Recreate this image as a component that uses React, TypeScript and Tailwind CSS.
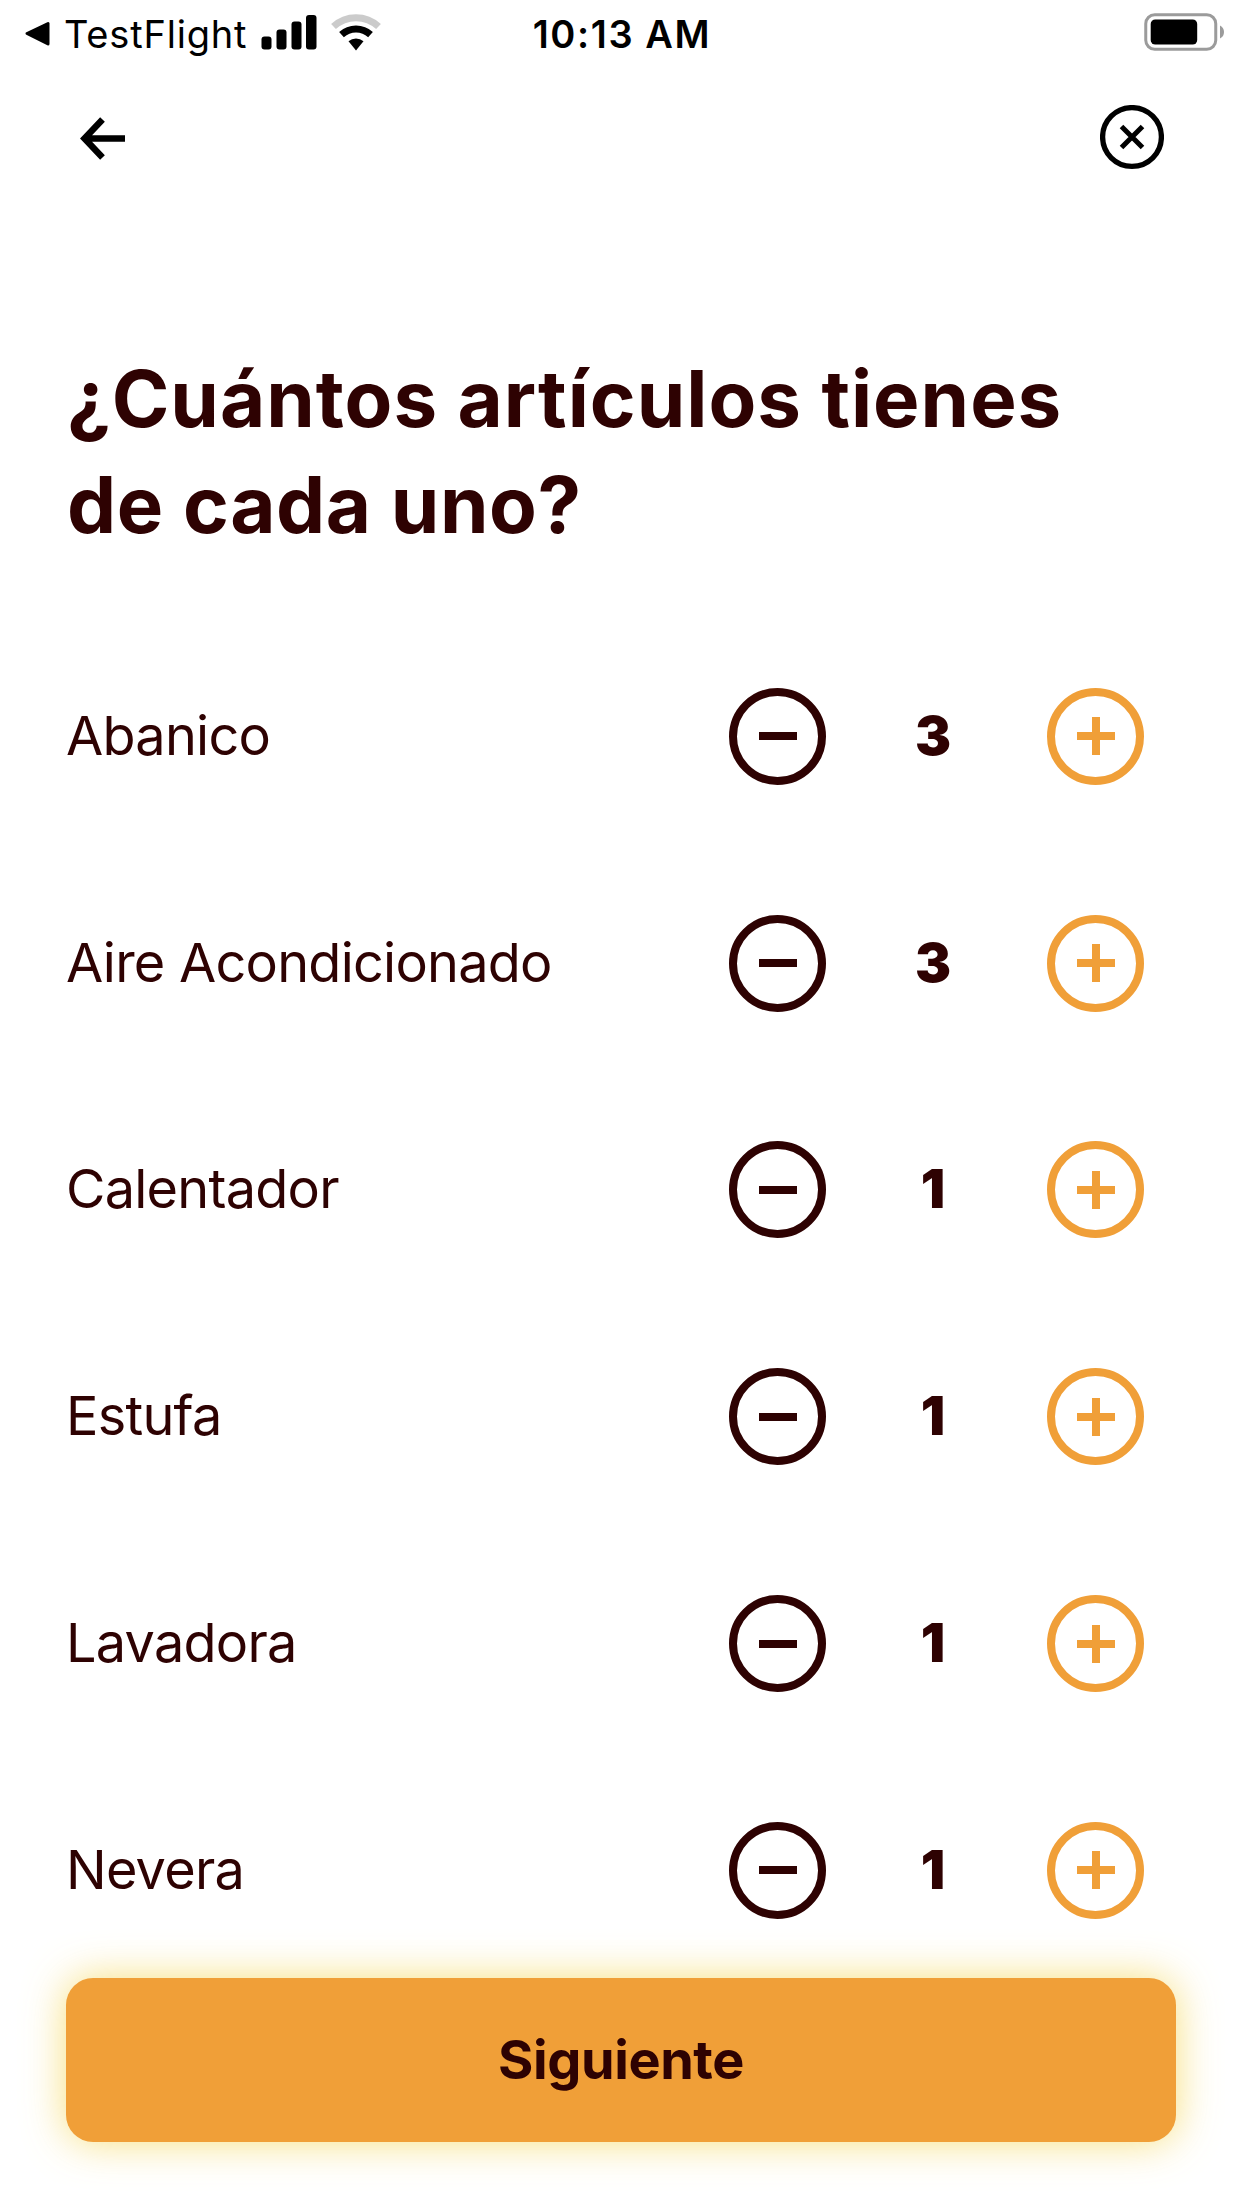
import { useState } from "react";
import clsx from "clsx";

type Article = {
  name: string;
  count: number;
};

const initialArticles: Article[] = [
  { name: "Abanico", count: 3 },
  { name: "Aire Acondicionado", count: 3 },
  { name: "Calentador", count: 1 },
  { name: "Estufa", count: 1 },
  { name: "Lavadora", count: 1 },
  { name: "Nevera", count: 1 },
];

function StatusBar() {
  return (
    <div className="grid h-16 grid-cols-[1fr_auto_1fr] items-center pl-6 pr-[18px] text-black">
      <div className="flex items-center">
        <svg className="mt-[3px]" width="27" height="28" viewBox="0 0 27 28">
          <path d="M3 13.5 24 3.5v20.5Z" fill="currentColor" stroke="currentColor" strokeWidth="3" strokeLinejoin="round" />
        </svg>
        <span className="ml-[13px] pt-1 text-[38px] leading-[60px] tracking-[0.8px]">TestFlight</span>
        <svg className="ml-3.5" width="56" height="38" viewBox="0 0 56 38" fill="currentColor">
          <rect x="0.5" y="23.5" width="10" height="13" rx="3" />
          <rect x="15.5" y="16.5" width="10" height="20" rx="3" />
          <rect x="30.5" y="8.5" width="10" height="28" rx="3" />
          <rect x="45" y="2" width="10.5" height="34.5" rx="3" />
        </svg>
        <svg className="ml-3.5 mt-0.5" width="50" height="38" viewBox="0 0 50 38" fill="none">
          <path d="M2.5 12.5a33 33 0 0 1 45 0" stroke="#cbcbcb" strokeWidth="7" />
          <path d="M10.5 20.7a21.5 21.5 0 0 1 29 0" stroke="currentColor" strokeWidth="7" />
          <path d="M17.5 27.3a11.5 11.5 0 0 1 15 0L25 36.5Z" fill="currentColor" />
        </svg>
      </div>
      <span className="pr-1 pt-1 text-[38px] font-semibold leading-[60px] tracking-[1.6px]">10:13 AM</span>
      <svg className="justify-self-end" width="80" height="38" viewBox="0 0 80 38">
        <rect x="1.75" y="1.75" width="70" height="34.5" rx="9" fill="none" stroke="#9b9b9b" strokeWidth="3" />
        <rect x="6.7" y="6.5" width="46.5" height="25" rx="4.5" fill="currentColor" />
        <path d="M76 12.5q4 2 4 6.500t-4 6.500Z" fill="#9b9b9b" />
      </svg>
    </div>
  );
}

function Header() {
  return (
    <header className="flex h-36 items-center justify-between px-[78px] pt-[3px] text-black">
      <button aria-label="Volver">
        <svg width="50" height="50" viewBox="0 0 50 50" fill="none" stroke="currentColor" strokeWidth="6.500">
          <path d="M47 25.500H7M24.500 6.500 6.500 25.500l18 19" />
        </svg>
      </button>
      <button aria-label="Cerrar">
        <svg width="64" height="66" viewBox="0 0 64 66" fill="none" stroke="currentColor">
          <circle cx="32" cy="32" r="29.400" strokeWidth="5.300" />
          <path d="m21.500 21.500 21 21M42.500 21.500l-21 21" strokeWidth="5" />
        </svg>
      </button>
    </header>
  );
}

type StepButtonProps = {
  kind: "minus" | "plus";
  onClick: () => void;
};

function StepButton({ kind, onClick }: StepButtonProps) {
  return (
    <button
      aria-label={kind === "minus" ? "Quitar" : "Agregar"}
      onClick={onClick}
      className={clsx(
        "flex size-[97px] items-center justify-center rounded-full border-8",
        kind === "minus" ? "border-[#2e0202] text-[#2e0202]" : "border-[#f09f38] text-[#f09f38]",
      )}
    >
      <svg width="38" height="38" viewBox="0 0 38 38" stroke="currentColor" strokeWidth="8">
        <path d={kind === "minus" ? "M0 19h38" : "M0 19h38M19 0v38"} />
      </svg>
    </button>
  );
}

export default function App() {
  const [articles, setArticles] = useState(initialArticles);

  const changeCount = (name: string, delta: number) =>
    setArticles((prev) =>
      prev.map((a) => (a.name === name ? { ...a, count: Math.max(0, a.count + delta) } : a)),
    );

  return (
    <div className="flex h-[2208px] w-[1242px] flex-col overflow-hidden bg-white font-['Inter',sans-serif] text-[#2e0202]">
      <StatusBar />
      <Header />
      <main className="min-h-0 flex-1 px-[66px] pt-[138px]">
        <h1 className="pl-px text-[78px] font-bold leading-[106px] tracking-[1px]">
          ¿Cuántos artículos tienes
          <br />
          <span className="tracking-[0.6px]">de cada uno?</span>
        </h1>
        <ul className="mt-[65px]">
          {articles.map(({ name, count }) => (
            <li key={name} className="flex h-[226.8px] items-center">
              <span className="flex-1 pb-0.5 text-[54px] tracking-[-0.75px]">{name}</span>
              <div className="mr-8 flex items-center">
                <StepButton kind="minus" onClick={() => changeCount(name, -1)} />
                <span className="w-[221px] pb-0.5 pr-[7px] text-center text-[54px] font-black">{count}</span>
                <StepButton kind="plus" onClick={() => changeCount(name, 1)} />
              </div>
            </li>
          ))}
        </ul>
      </main>
      <footer className="px-[66px] pb-[66px]">
        <button className="h-[164px] w-full rounded-[27px] bg-[#f09f38] pb-px text-[54px] font-bold tracking-[-0.4px] shadow-[0_0_40px_rgba(245,215,90,0.8)]">
          Siguiente
        </button>
      </footer>
    </div>
  );
}
